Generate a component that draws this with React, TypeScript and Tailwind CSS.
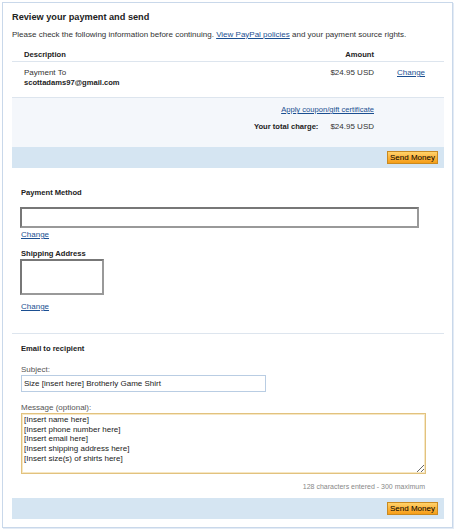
import { useState } from "react";

const link = "text-[#1b4f91] underline cursor-pointer";
const label = "font-bold text-[7.6px] text-[#222]";

const SendMoneyButton = () => (
  <button
    type="button"
    className="h-[13px] w-[51px] border border-[#c98a22] bg-linear-to-b from-[#ffd36a] via-[#fdb43a] to-[#f59e16] text-[8px] leading-none text-black"
  >
    Send Money
  </button>
);

const ActionBar = () => (
  <div className="flex h-[21px] items-center justify-end bg-[#d5e5f2] pr-[6px]">
    <SendMoneyButton />
  </div>
);

export default function App() {
  const [subject, setSubject] = useState("Size [insert here] Brotherly Game Shirt");
  const [message, setMessage] = useState(
    "[Insert name here]\n[Insert phone number here]\n[Insert email here]\n[Insert shipping address here]\n[Insert size(s) of shirts here]"
  );

  return (
    <div className="min-h-screen bg-white pt-[2px] pl-[2px] font-['Liberation_Sans',Arial,sans-serif] text-[8px] text-[#333]">
      <div className="h-[526px] w-[451px] border border-[#c9d8ea] px-[9px] pr-[8px] shadow-[1px_1px_0_#e3ebf5]">
        {/* heading */}
        <div className="flex h-[22px] items-end text-[9.2px] font-bold text-[#222]">
          Review your payment and send
        </div>
        <div className="mt-[4px] flex h-[12px] items-center">
          Please check the following information before continuing.&nbsp;
          <span className={link}>View PayPal policies</span>&nbsp;and your payment source rights.
        </div>

        {/* summary table */}
        <div className={`flex h-[21px] items-end border-b border-[#dde5ee] pb-[1px] ${label}`}>
          <div className="pl-[12px]">Description</div>
          <div className="ml-auto pr-[70px] text-right">Amount</div>
        </div>
        <div className="flex h-[36px] border-b border-[#dde5ee] pt-[6px]">
          <div className="pl-[12px] leading-[10px]">
            <div>Payment To</div>
            <div className={label}>scottadams97@gmail.com</div>
          </div>
          <div className="ml-auto leading-[10px]">$24.95 USD</div>
          <div className="w-[70px] pl-[23px] leading-[10px]">
            <span className={link}>Change</span>
          </div>
        </div>
        <div className="h-[49px] bg-[#f4f7fb] pr-[70px] text-right">
          <div className="pt-[7px] text-[7.6px] leading-[10px]">
            <span className={link}>Apply coupon/gift certificate</span>
          </div>
          <div className="mt-[7px] flex items-center justify-end leading-[10px]">
            <span className={label}>Your total charge:</span>
            <span className="ml-[12px]">$24.95 USD</span>
          </div>
        </div>
        <ActionBar />

        {/* payment details */}
        <div className="pl-[9px]">
          <div className={`mt-[20px] leading-[10px] ${label}`}>Payment Method</div>
          <div className="-ml-px mt-[9px] h-[21px] w-[399px] border-2 border-[#777] border-b-[#999] border-r-[#999]" />
          <div className="mt-[2px] leading-[10px]">
            <span className={link}>Change</span>
          </div>
          <div className={`mt-[9px] leading-[10px] ${label}`}>Shipping Address</div>
          <div className="-ml-px h-[36px] w-[84px] border-2 border-[#777] border-b-[#999] border-r-[#999]" />
          <div className="mt-[7px] leading-[10px]">
            <span className={link}>Change</span>
          </div>
        </div>

        <div className="mt-[21px] border-t border-[#dde5ee]" />

        {/* email to recipient */}
        <div className="pl-[9px]">
          <div className={`mt-[10px] leading-[10px] ${label}`}>Email to recipient</div>
          <div className="mt-[11px] leading-[10px] text-[#555]">Subject:</div>
          <input
            value={subject}
            onChange={(e) => setSubject(e.target.value)}
            className="block h-[17px] w-[245px] border border-[#b9cde3] px-[2px] text-[8px] text-[#222] outline-none"
          />
          <div className="mt-[11px] leading-[10px] text-[#555]">Message (optional):</div>
          <textarea
            value={message}
            onChange={(e) => setMessage(e.target.value)}
            className="block h-[61px] w-[405px] resize border border-[#e2c27e] px-[2px] pt-[1px] text-[8px] leading-[9.7px] text-[#222] outline-none shadow-[inset_0_0_0_1px_#f6e7c4]"
          />
          <div className="mt-[8px] pr-[19px] text-right text-[7px] leading-[10px] text-[#888]">
            128 characters entered - 300 maximum
          </div>
        </div>

        <div className="mt-[6px]">
          <ActionBar />
        </div>
      </div>
    </div>
  );
}
